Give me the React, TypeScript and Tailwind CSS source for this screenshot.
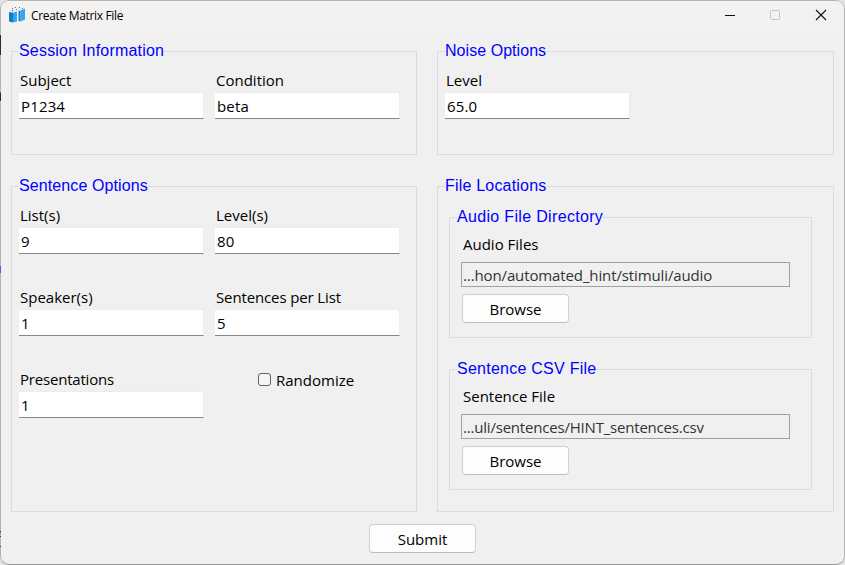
import type { ReactNode } from "react";

const ui = "font-['Open_Sans','Noto_Sans',sans-serif] text-[15px] leading-[22px] whitespace-nowrap";

function Group({
  title,
  className,
  spacing = "tracking-[0.2px]",
  children,
}: {
  title: string;
  className: string;
  spacing?: string;
  children: ReactNode;
}) {
  return (
    <section className={`border border-[#dcdcdc] pl-[7px] ${className}`}>
      <h2
        className={`-mt-[12px] h-[20px] w-fit whitespace-nowrap bg-[#f0f0f0] font-['Liberation_Sans',Arial,sans-serif] text-[16px] leading-[22px] text-[#0000ff] ${spacing}`}
      >
        {title}
      </h2>
      {children}
    </section>
  );
}

function Field({ label, value, spacing = "tracking-[-0.13px]" }: { label: string; value: string; spacing?: string }) {
  return (
    <div className="w-[185px]">
      <div className={`flex h-[22px] pl-px text-black ${ui} ${spacing}`}>
        <span className="-mt-px block">{label}</span>
      </div>
      <div
        className={`h-[27px] border border-l-0 border-[#ececec] border-b-[#868686] bg-white pl-[2px] pt-[2px] text-black tracking-[0.15px] ${ui}`}
      >
        {value}
      </div>
    </div>
  );
}

function Button({ children }: { children: ReactNode }) {
  return (
    <button
      className={`block h-[29px] w-[107px] rounded-[4px] border border-[#d0d0d0] border-b-[#bcbcbc] bg-[#fdfdfd] text-center text-black ${ui}`}
    >
      {children}
    </button>
  );
}

function FilePicker({ label, path, spacing }: { label: string; path: string; spacing: string }) {
  return (
    <div className="mt-[7px] pl-[4px]">
      <div className={`h-[22px] pl-[2px] text-black tracking-[0px] ${ui}`}>{label}</div>
      <div className={`mt-[7px] h-[25px] w-[329px] border border-[#a0a0a0] pl-px pt-px text-[#333333] ${spacing} ${ui}`}>
        {path}
      </div>
      <div className="mt-[7px] pl-px">
        <Button>Browse</Button>
      </div>
    </div>
  );
}

export default function App() {
  return (
    <div className="flex h-[565px] w-[845px] overflow-hidden bg-[#e4e4e4]">
      <main className="relative h-[565px] w-[845px] overflow-hidden rounded-[9px] border border-[#b4b4b4] border-b-[#979797] bg-[#f0f0f0]">
        <header className="flex h-[30px] items-center bg-[#f3f2f1] pl-[8px]">
          <svg width="17" height="18" viewBox="9 7 17 18">
            <path d="M9 12L13 12.6V22.5L9 21.5Z" fill="#0a80cc" />
            <path d="M13 12.6L17 11.6V21.5L13 22.5Z" fill="#3ba4ee" />
            <path d="M18.6 10.5L20.5 11V21.6L18.6 21Z" fill="#0a80cc" />
            <path d="M20.5 10.5L25 8.6V19.5L20.5 21.6Z" fill="#3ba4ee" />
            <path d="M9 12L13 10.8L17 11.6L13 12.6Z" fill="#cfe6f7" />
            <path d="M12 10h1v1h-1zM12 8h1v1h-1zM15 7h1v1h-1zM16 9h1v1h-1zM19 7h1v1h-1zM22 8h1v1h-1z" fill="#1585cf" />
          </svg>
          <span className="ml-[5px] whitespace-nowrap font-['Open_Sans','Noto_Sans',sans-serif] text-[12px] leading-[20px] tracking-[-0.33px] text-black">
            Create Matrix File
          </span>
          <svg className="ml-auto" width="120" height="30" viewBox="724 1 120 30" fill="none">
            <path d="M725 15.5H735" stroke="#111" />
            <rect x="770.5" y="10.5" width="9" height="9" rx="1" stroke="#c4c4c4" />
            <path d="M816 10L826 20M826 10L816 20" stroke="#111" strokeWidth="1.1" />
          </svg>
        </header>
        <div className="flex gap-[20px] pl-[10px] pt-[20px]">
          <div>
            <Group title="Session Information" className="h-[104px] w-[406px]">
              <div className="mt-[10px] flex gap-[11px]">
                <Field label="Subject" value="P1234" spacing="tracking-[0px]" />
                <Field label="Condition" value="beta" spacing="tracking-[0px]" />
              </div>
            </Group>
            <Group title="Sentence Options" className="mt-[31px] h-[326px] w-[406px]" spacing="tracking-[0.1px]">
              <div className="mt-[10px] grid w-fit grid-cols-2 gap-x-[11px] gap-y-[33px]">
                <Field label="List(s)" value="9" spacing="tracking-[0px]" />
                <Field label="Level(s)" value="80" spacing="tracking-[0px]" />
                <Field label="Speaker(s)" value="1" spacing="tracking-[0px]" />
                <Field label="Sentences per List" value="5" />
                <Field label="Presentations" value="1" spacing="tracking-[-0.2px]" />
                <label className={`flex h-[22px] items-center pl-[43px] text-black tracking-[0px] ${ui}`}>
                  <span className="-mt-px mr-[5px] size-[13px] rounded-[3px] border border-[#626262] bg-[#f5f5f5]" />
                  Randomize
                </label>
              </div>
            </Group>
          </div>
          <div>
            <Group title="Noise Options" className="h-[104px] w-[397px]" spacing="tracking-[0.05px]">
              <div className="mt-[10px]">
                <Field label="Level" value="65.0" spacing="tracking-[0px]" />
              </div>
            </Group>
            <Group title="File Locations" className="mt-[31px] h-[326px] w-[397px]">
              <div className="ml-[4px] mt-[22px] flex flex-col gap-[31px]">
                <Group title="Audio File Directory" className="h-[121px] w-[363px]" spacing="tracking-[0.33px]">
                  <FilePicker
                    label="Audio Files"
                    path="...hon/automated_hint/stimuli/audio"
                    spacing="tracking-[-0.12px]"
                  />
                </Group>
                <Group title="Sentence CSV File" className="h-[121px] w-[363px]" spacing="tracking-[0.25px]">
                  <FilePicker
                    label="Sentence File"
                    path="...uli/sentences/HINT_sentences.csv"
                    spacing="tracking-[-0.2px]"
                  />
                </Group>
              </div>
            </Group>
          </div>
        </div>
        <div className="mt-[12px] pl-[368px]">
          <Button>Submit</Button>
        </div>
      </main>
      {/* Sliver of the windows behind, along the left edge */}
      <div className="absolute left-0 top-[35px] w-px">
        <div className="h-[20px] bg-[#2c2c32]" />
        <div className="mt-[37px] h-px bg-[#4a6aa8]" />
        <div className="h-[8px] bg-[#2c2c32]" />
        <div className="mt-[165px] h-[7px] bg-[#6a55c0]" />
        <div className="mt-[258px] h-px bg-[#2c2c32]" />
        <div className="h-[2px] bg-[#c98a50]" />
        <div className="mt-[2px] h-px bg-[#34346a]" />
        <div className="mt-[9px] h-px bg-[#34346a]" />
      </div>
    </div>
  );
}
